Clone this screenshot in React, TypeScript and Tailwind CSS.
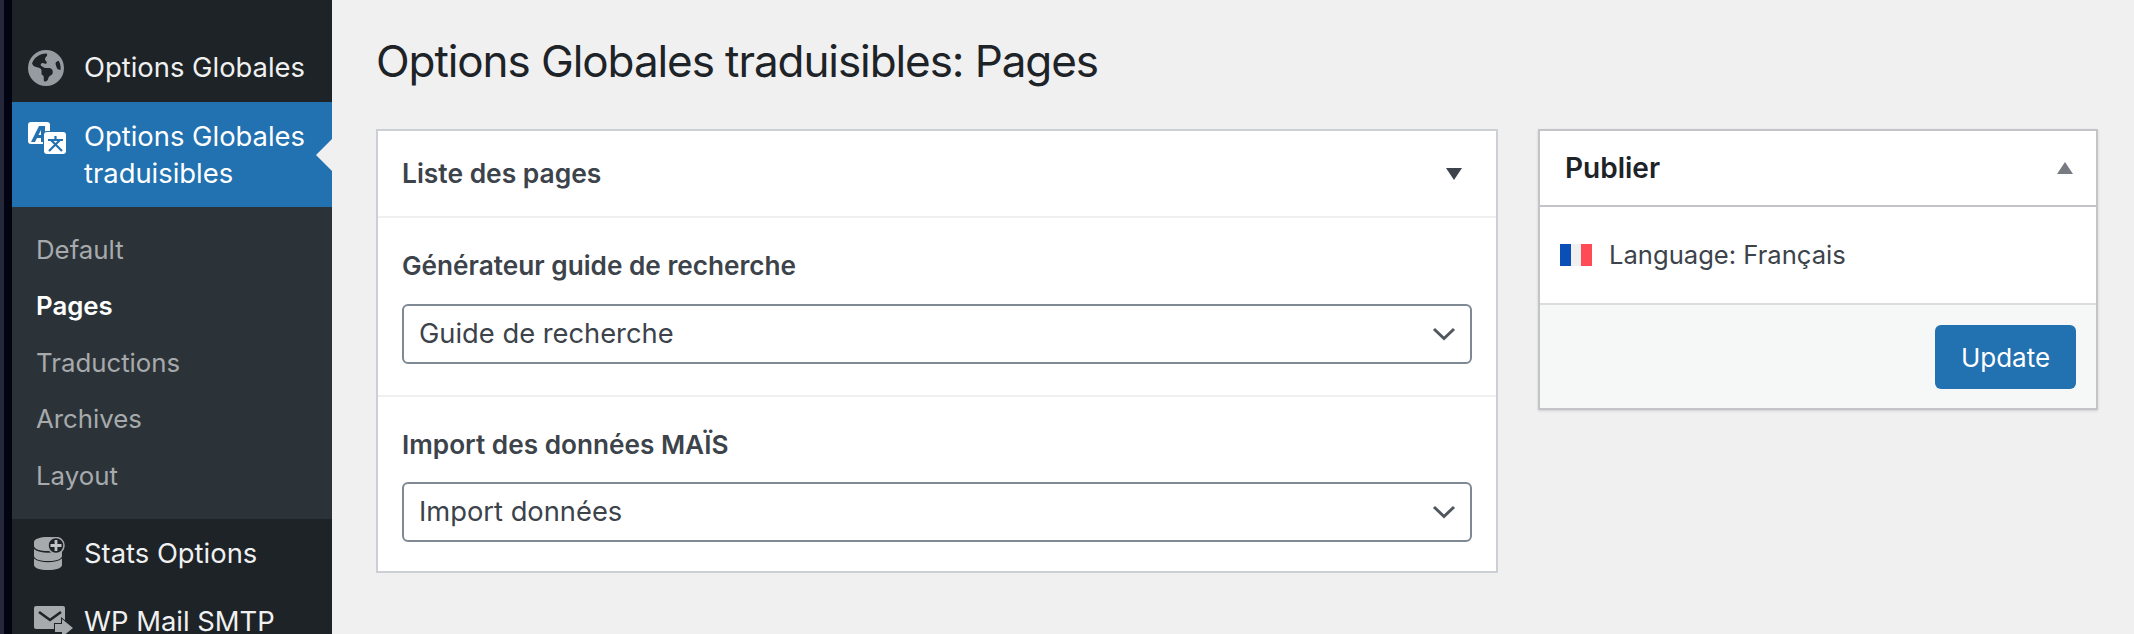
import { FaEarthAmericas } from 'react-icons/fa6';

const subItems = [
  { label: 'Default', current: false },
  { label: 'Pages', current: true },
  { label: 'Traductions', current: false },
  { label: 'Archives', current: false },
  { label: 'Layout', current: false },
];

const TranslateIcon = () => (
  <svg width="39" height="33" viewBox="0 0 39 33" fill="none">
    <rect width="22" height="22" rx="3" fill="#fff" />
    <path fillRule="evenodd" fill="#2271b1" d="M3 20L11 4h6v16h-4v-4H9l-2 4zM13 8l-2.500 5H13z" />
    <rect x="15" y="9" width="24" height="24" rx="4" fill="#2271b1" />
    <rect x="16" y="10" width="22" height="22" rx="3" fill="#fff" />
    <path d="M20 18h15M27.500 14v4M32 18L21 29M23 18l11 11" stroke="#2271b1" strokeWidth="2.200" />
  </svg>
);

const StatsIcon = () => (
  <svg width="31" height="33" viewBox="0 0 31 33" fill="#a7aaad">
    <path d="M0 5c0-3 6-5 14-5s14 2 14 5v4c0 3-6 5-14 5S0 12 0 9z" />
    <path d="M0 12c3 2.500 8 3.700 14 3.700S25 14.500 28 12v7c0 3-6 5-14 5S0 22 0 19z" />
    <path d="M0 21.500c3 2.500 8 3.700 14 3.700s11-1.200 14-3.700V28c0 3-6 5-14 5S0 31 0 28z" />
    <circle cx="22" cy="8.500" r="8" fill="#1d2327" stroke="#a7aaad" strokeWidth="1.500" />
    <path d="M20.600 3h2.800v4.100h4.100v2.800h-4.100V14h-2.800V9.900h-4.100V7.100h4.100z" fill="#c3c4c7" />
  </svg>
);

const MailIcon = () => (
  <svg width="40" height="30" viewBox="0 0 40 30" className="shrink-0">
    <rect width="31" height="23" rx="2" fill="#a7aaad" />
    <path d="M5 6l11 8 11-8" fill="none" stroke="#1d2327" strokeWidth="2.600" />
    <path d="M21 18h7v-5l11 9-11 9v-5h-7z" fill="#a7aaad" stroke="#1d2327" strokeWidth="2" paintOrder="stroke" />
  </svg>
);

const Triangle = ({ up, color }: { up?: boolean; color: string }) => (
  <svg width="16" height="12" viewBox="0 0 16 12">
    <path d={up ? 'M8 0l8 12H0z' : 'M0 0h16l-8 12z'} fill={color} />
  </svg>
);

const Chevron = () => (
  <svg width="24" height="14" viewBox="0 0 24 14" fill="none">
    <path d="M2 2l10 9.500L22 2" stroke="#50575e" strokeWidth="3" />
  </svg>
);

const MenuItem = ({ icon, label, pad, low }: { icon: React.ReactNode; label: string; pad: string; low?: boolean }) => (
  <div className="flex h-[68px] shrink-0 items-center text-[27.400px] text-[#f0f0f1]">
    <div className={`flex w-[72px] shrink-0 ${pad}`}>{icon}</div>
    <span className={low ? 'mt-[2px]' : ''}>{label}</span>
  </div>
);

const Select = ({ value }: { value: string }) => (
  <div className="flex h-[60px] items-center justify-between rounded-[6px] border-2 border-[#7e8993] bg-white pr-[14px] pl-[15px] text-[27.300px] text-[#3c434a]">
    <span>{value}</span>
    <Chevron />
  </div>
);

const Field = ({ label, value, className, labelGap }: { label: string; value: string; className: string; labelGap: string }) => (
  <div className={`px-[24px] pt-[30px] ${className}`}>
    <label className={`block text-[26.200px] leading-[36px] font-semibold text-[#3c434a] ${labelGap}`}>{label}</label>
    <Select value={value} />
  </div>
);

export default function App() {
  return (
    <div className="flex h-[634px] w-[2134px] overflow-hidden bg-[#f0f0f1] font-['Inter',sans-serif]">
      <div className="w-[4px] shrink-0 bg-[#25273a]" />
      <div className="w-[8px] shrink-0 bg-[#020412]" />

      <aside className="flex w-[320px] shrink-0 flex-col bg-[#1d2327] pt-[34px]">
        <MenuItem icon={<FaEarthAmericas size={36} color="#969ba1" />} label="Options Globales" pad="pl-[16px]" />

        <div className="relative flex h-[105px] shrink-0 bg-[#2271b1] pt-[16px] text-[27.400px] leading-[37px] text-white">
          <div className="w-[72px] shrink-0 pt-[4px] pl-[16px]">
            <TranslateIcon />
          </div>
          <span>
            Options Globales
            <br />
            traduisibles
          </span>
          <div className="absolute top-[37px] right-0 h-0 w-0 border-y-[16px] border-r-[16px] border-y-transparent border-r-[#f0f0f1]" />
        </div>

        <div className="flex h-[312px] shrink-0 flex-col bg-[#2c3338] pt-[15px] pl-[24px] text-[25.800px]">
          {subItems.map((item) => (
            <div
              key={item.label}
              className={
                item.current
                  ? 'flex h-[56.500px] items-center font-semibold text-white'
                  : 'flex h-[56.500px] items-center text-[#a7aaad]'
              }
            >
              {item.label}
            </div>
          ))}
        </div>

        <MenuItem icon={<StatsIcon />} label="Stats Options" pad="pl-[22px]" low />
        <MenuItem icon={<MailIcon />} label="WP Mail SMTP" pad="pl-[22px]" low />
      </aside>

      <main className="flex-1 pt-[31px] pl-[44px]">
        <h1 className="text-[44px] leading-[60px] tracking-[-1.080px] text-[#1d2327]">
          Options Globales traduisibles: Pages
        </h1>

        <div className="mt-[38px] flex items-start gap-[40px]">
          <section className="w-[1122px] border-2 border-[#ccd0d4] bg-white">
            <div className="flex h-[87px] items-center justify-between border-b-2 border-[#f0f0f1] pr-[34px] pl-[24px]">
              <h2 className="text-[26.400px] font-semibold text-[#3c434a]">Liste des pages</h2>
              <Triangle color="#3c434a" />
            </div>

            <Field label="Générateur guide de recherche" value="Guide de recherche" labelGap="mb-[20px]" className="h-[179px] border-b-2 border-[#f0f0f1]" />
            <Field label="Import des données MAÏS" value="Import données" labelGap="mb-[19px]" className="h-[174px]" />
          </section>

          <section className="w-[560px] border-2 border-[#c3c4c7] bg-white shadow-sm">
            <div className="flex h-[76px] items-center justify-between border-b-2 border-[#c3c4c7] pr-[23px] pl-[25px]">
              <h2 className="text-[28px] font-semibold text-[#1d2327]">Publier</h2>
              <Triangle up color="#787c82" />
            </div>

            <div className="flex h-[96px] items-center gap-[17px] pl-[20px] text-[25.600px] text-[#3c434a]">
              <div className="flex h-[22px] w-[32px] overflow-hidden">
                <div className="flex-1 bg-[#0a4fb5]" />
                <div className="flex-1 bg-[#f0f0f1]" />
                <div className="flex-1 bg-[#ff4b55]" />
              </div>
              <span>Language: Français</span>
            </div>

            <div className="flex h-[105px] items-start justify-end border-t-2 border-[#dcdcde] bg-[#f6f7f7] pt-[20px] pr-[20px]">
              <button className="h-[64px] w-[141px] rounded-[6px] bg-[#2271b1] text-[26px] text-white">Update</button>
            </div>
          </section>
        </div>
      </main>
    </div>
  );
}
